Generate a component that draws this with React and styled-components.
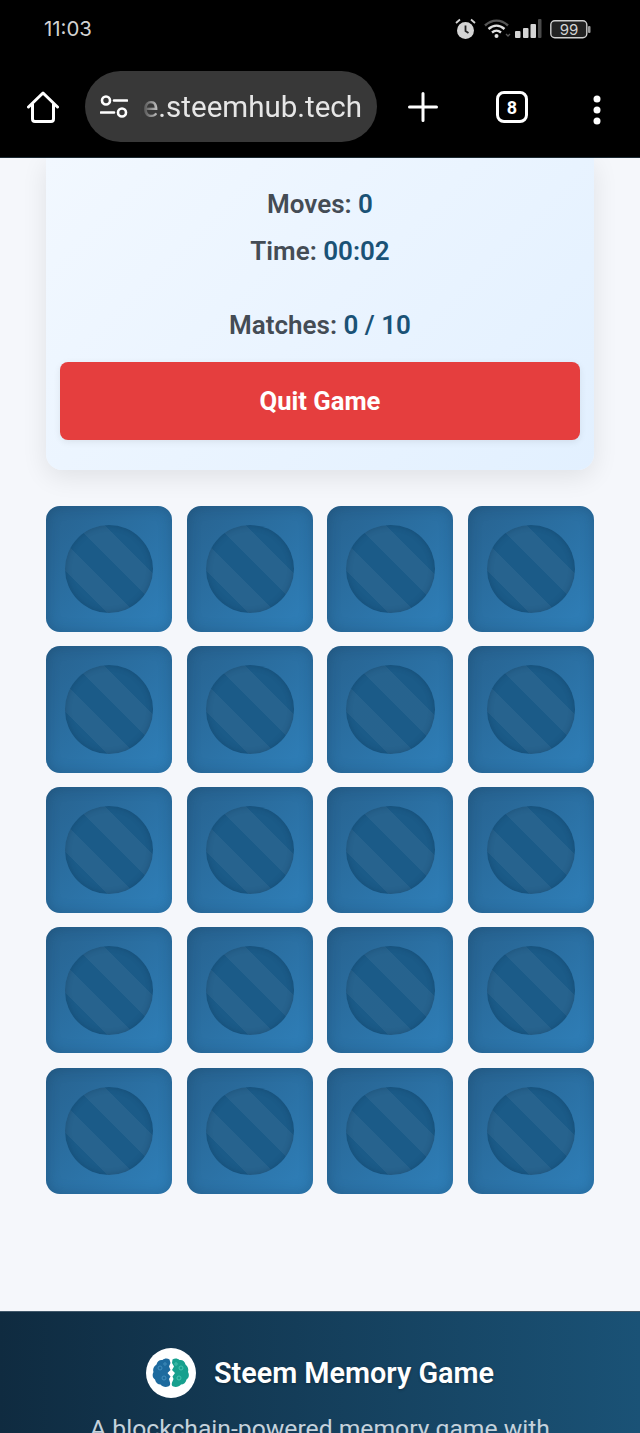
import React from 'react'
import styled, { createGlobalStyle } from 'styled-components'

const Global = createGlobalStyle`
  html, body {
    margin: 0;
    padding: 0;
    background: #f5f7fb;
  }
  * { box-sizing: border-box; }
`

const Screen = styled.div`
  width: 640px;
  height: 1433px;
  overflow: hidden;
  display: flex;
  flex-direction: column;
  font-family: Roboto, "Liberation Sans", sans-serif;
  background: #f5f7fb;
`

const StatusBar = styled.div`
  height: 71px;
  flex: none;
  background: #000;
  display: flex;
  align-items: flex-start;
  justify-content: space-between;
  padding: 17px 49px 0 44px;
`

const Clock = styled.div`
  font-family: Inter, Roboto, sans-serif;
  font-size: 20.4px;
  line-height: 24px;
  color: #d2d2d2;
`

const StatusIcons = styled.div`
  display: flex;
  align-items: center;
  height: 24px;
`

const Toolbar = styled.div`
  height: 87px;
  flex: none;
  background: #000;
  display: flex;
  align-items: flex-start;
  border-bottom: 1px solid #1c2a33;
  padding-left: 27px;
`

const ToolIcon = styled.svg`
  flex: none;
  display: block;
  margin-top: ${p => p.$top}px;
  margin-left: ${p => p.$left}px;
`

const UrlPill = styled.div`
  width: 292px;
  height: 71px;
  margin-left: 26px;
  border-radius: 36px;
  background: #383838;
  display: flex;
  align-items: center;
  padding-left: 15px;
  flex: none;
`

const UrlText = styled.div`
  width: 222px;
  margin-left: 12px;
  font-family: Roboto, Inter, sans-serif;
  font-size: 29.5px;
  line-height: 36px;
  color: #e6e6e6;
  white-space: nowrap;
  overflow: hidden;
  direction: rtl;
  -webkit-mask-image: linear-gradient(90deg, transparent 0, #000 22px);
  mask-image: linear-gradient(90deg, transparent 0, #000 22px);
`

const TabCount = styled.div`
  width: 32px;
  height: 32px;
  margin-top: 20px;
  margin-left: 58px;
  border: 3px solid #fff;
  border-radius: 8px;
  color: #fff;
  font-size: 18px;
  font-weight: 700;
  display: flex;
  align-items: center;
  justify-content: center;
  flex: none;
`

const Main = styled.main`
  flex: 1;
  min-height: 0;
  padding: 0 46px;
  display: flex;
  flex-direction: column;
`

const Panel = styled.section`
  height: 312px;
  flex: none;
  background: linear-gradient(135deg, #f2f8ff, #e2f0ff);
  border-radius: 0 0 16px 16px;
  box-shadow: 0 7px 26px rgba(0, 0, 0, 0.09);
  padding: 27px 14px 0;
  display: flex;
  flex-direction: column;
  align-items: center;
`

const Stat = styled.div`
  font-size: 26px;
  line-height: 38px;
  font-weight: 600;
  color: #444c55;
  margin-bottom: ${p => p.$gap}px;

  b {
    font-weight: 600;
    color: #1a5276;
  }
`

const QuitButton = styled.button`
  width: 100%;
  height: 78px;
  flex: none;
  border: none;
  border-radius: 8px;
  background: #e53e3e;
  color: #fff;
  font-family: inherit;
  font-size: 25.6px;
  font-weight: 700;
  box-shadow: 0 2px 7px rgba(0, 0, 0, 0.08);
`

const Board = styled.div`
  margin-top: 36px;
  display: grid;
  grid-template-columns: repeat(4, 1fr);
  column-gap: 14.4px;
  row-gap: 14.2px;
`

const Tile = styled.div`
  aspect-ratio: 1;
  border-radius: 14px;
  background: linear-gradient(135deg, #27628f, #2f80ba);
  box-shadow: inset 0 0 14px rgba(15, 50, 80, 0.3);
  display: flex;
  align-items: center;
  justify-content: center;
`

const TileDisc = styled.div`
  width: 70%;
  height: 70%;
  border-radius: 50%;
  background: repeating-linear-gradient(
      45deg,
      rgba(255, 255, 255, 0.05) 0,
      rgba(255, 255, 255, 0.05) 10px,
      transparent 10px,
      transparent 30px,
      rgba(255, 255, 255, 0.05) 30px,
      rgba(255, 255, 255, 0.05) 40px
    ),
    #1b5b88;
  box-shadow: inset 0 0 6px rgba(10, 40, 70, 0.3);
`

const Footer = styled.footer`
  height: 122px;
  flex: none;
  background: linear-gradient(90deg, #0f2b40, #1a5276);
  border-top: 1px solid #41586a;
  padding-top: 36px;
  display: flex;
  flex-direction: column;
  align-items: center;
`

const Brand = styled.div`
  display: flex;
  align-items: center;
  gap: 18px;
`

const Logo = styled.div`
  width: 50px;
  height: 50px;
  border-radius: 50%;
  background: #fff;
  display: flex;
  align-items: center;
  justify-content: center;
`

const BrandName = styled.div`
  font-size: 28.8px;
  font-weight: 600;
  color: #fff;
  text-shadow: 0 1px 3px rgba(0, 0, 0, 0.3);
`

const Tagline = styled.p`
  margin: 16px 0 0;
  font-size: 24.7px;
  line-height: 30px;
  color: #c5d2dc;
  white-space: nowrap;
`

function Alarm() {
  return (
    <svg width="21" height="22" viewBox="0 0 21 22" style={{ marginLeft: 2 }}>
      <circle cx="10.5" cy="12.5" r="8.5" fill="#d4d4d4" />
      <path d="M10.5 7.5v5.5l3 2" fill="none" stroke="#222" strokeWidth="1.8" />
      <path d="M1 5l4-3.5M20 5l-4-3.5" stroke="#d4d4d4" strokeWidth="1.8" />
    </svg>
  )
}

function Wifi() {
  return (
    <svg width="27" height="22" viewBox="0 0 27 22" style={{ marginLeft: 8 }}>
      <path d="M1 7.500c7-6.500 16-6.500 23 0" fill="none" stroke="#555" strokeWidth="2.400" />
      <path d="M4.500 11c5-4.500 11-4.500 16 0" fill="none" stroke="#e0e0e0" strokeWidth="2.400" />
      <path d="M8 14.500c3-2.500 6-2.500 9 0" fill="none" stroke="#e0e0e0" strokeWidth="2.400" />
      <circle cx="12.500" cy="18" r="2" fill="#e0e0e0" />
      <path d="M22 16l2 2 2-2" fill="none" stroke="#555" strokeWidth="1.300" />
    </svg>
  )
}

function Signal() {
  return (
    <svg width="27" height="20" viewBox="0 0 27 20" style={{ marginLeft: 4 }}>
      <rect x="0" y="12" width="5.500" height="7" rx="1" fill="#d4d4d4" />
      <rect x="8" y="9" width="5.500" height="10" rx="1" fill="#d4d4d4" />
      <rect x="15.500" y="5" width="5.500" height="14" rx="1" fill="#d4d4d4" />
      <rect x="23" y="0" width="3.500" height="19" rx="1" fill="#4a4a4a" />
    </svg>
  )
}

function Battery() {
  return (
    <svg width="41" height="19" viewBox="0 0 41 19" style={{ marginLeft: 8 }}>
      <rect x="0.800" y="0.800" width="36" height="17" rx="4" fill="#222" stroke="#cfcfcf" strokeWidth="1.400" />
      <rect x="38" y="6" width="2.500" height="7" rx="1" fill="#9a9a9a" />
      <text x="19" y="14.500" textAnchor="middle" fontSize="15" fill="#d4d4d4" fontFamily="Inter, sans-serif">99</text>
    </svg>
  )
}

function BrainLogo() {
  return (
    <svg width="38" height="30" viewBox="0 0 38 30">
      <path d="M17.500 1.500c-2-1.500-5-1.500-7 .5-3-.5-5.500 1.500-6 4.500C2 8 .5 11 1.500 14c-1.500 2.500-1 6 1.500 7.500.5 3 3 5 5.500 5 1.500 2 5 3 7.500 2 2-.5 2.500-2 2-4l-1-3.500 1.500-2.500-3-3.500 3-3-1.500-3.500 1.500-3.500z" fill="#1d6a9e" />
      <path d="M20.500 1.500c2-1.500 5-1.500 7 .5 3-.5 5.500 1.500 6 4.500 2 1.500 3.500 4.500 2.500 7.500 1.500 2.500 1 6-1.500 7.500-.5 3-3 5-5.500 5-1.500 2-5 3-7.500 2-2-.5-2-2-1.500-4l1.500-3.500-1-2.500 2.500-3.500-3-3 2-3.500-2-3.500z" fill="#17a08e" />
      <g fill="none" stroke="#5aa6cf" strokeWidth="1" opacity="0.6">
        <circle cx="8" cy="10" r="2" />
        <circle cx="12" cy="20" r="2" />
        <circle cx="13" cy="6" r="1.200" />
      </g>
      <g fill="none" stroke="#6ad9c7" strokeWidth="1" opacity="0.6">
        <circle cx="29" cy="10" r="2" />
        <circle cx="27" cy="20" r="2" />
        <circle cx="24" cy="6" r="1.200" />
      </g>
    </svg>
  )
}

export default function App() {
  const tiles = Array.from({ length: 20 }, (_, i) => i)

  return (
    <Screen>
      <Global />
      <StatusBar>
        <Clock>11:03</Clock>
        <StatusIcons>
          <Alarm />
          <Wifi />
          <Signal />
          <Battery />
        </StatusIcons>
      </StatusBar>

      <Toolbar>
        <ToolIcon width="32" height="32" viewBox="0 0 32 32" $top={20} $left={0}>
          <path d="M1.500 16L16 2l14.500 14M5.500 13v15c0 1.500 1 2.500 2.500 2.500h16c1.500 0 2.500-1 2.500-2.500V13" fill="none" stroke="#fff" strokeWidth="3" strokeLinecap="round" strokeLinejoin="round" />
        </ToolIcon>
        <UrlPill>
          <svg width="28" height="24" viewBox="0 0 28 24" style={{ flex: 'none' }}>
            <circle cx="6" cy="5.500" r="4" fill="none" stroke="#fff" strokeWidth="2.600" />
            <path d="M14 5.500h13M1 17.500h13" stroke="#fff" strokeWidth="2.600" strokeLinecap="round" />
            <circle cx="22" cy="17.500" r="4" fill="none" stroke="#fff" strokeWidth="2.600" />
          </svg>
          <UrlText>ue.steemhub.tech</UrlText>
        </UrlPill>
        <ToolIcon width="30" height="30" viewBox="0 0 30 30" $top={21} $left={31}>
          <path d="M15 1.500v27M1.500 15h27" stroke="#fff" strokeWidth="3" strokeLinecap="round" />
        </ToolIcon>
        <TabCount>8</TabCount>
        <ToolIcon width="8" height="30" viewBox="0 0 8 30" $top={24} $left={65}>
          <circle cx="4" cy="4" r="3.500" fill="#fff" />
          <circle cx="4" cy="15" r="3.500" fill="#fff" />
          <circle cx="4" cy="26" r="3.500" fill="#fff" />
        </ToolIcon>
      </Toolbar>

      <Main>
        <Panel>
          <Stat $gap={9}>Moves: <b>0</b></Stat>
          <Stat $gap={36}>Time: <b>00:02</b></Stat>
          <Stat $gap={18}>Matches: <b>0 / 10</b></Stat>
          <QuitButton type="button">Quit Game</QuitButton>
        </Panel>

        <Board>
          {tiles.map(t => (
            <Tile key={t}>
              <TileDisc />
            </Tile>
          ))}
        </Board>
      </Main>

      <Footer>
        <Brand>
          <Logo>
            <BrainLogo />
          </Logo>
          <BrandName>Steem Memory Game</BrandName>
        </Brand>
        <Tagline>A blockchain-powered memory game with</Tagline>
      </Footer>
    </Screen>
  )
}
